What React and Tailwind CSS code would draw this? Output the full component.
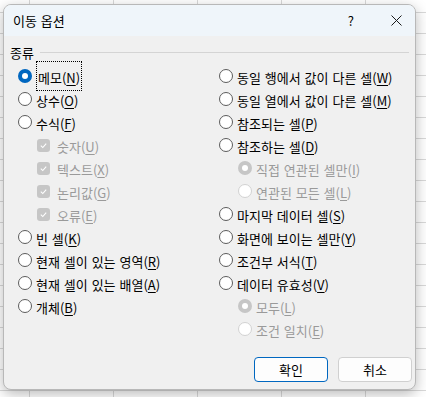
const font = { fontFamily: '"Noto Sans CJK KR", "Noto Sans", sans-serif' };

function Radio({ checked, disabled }) {
  if (checked && !disabled) {
    return (
      <span className="flex h-[14px] w-[14px] shrink-0 items-center justify-center rounded-full bg-[#0067c0]">
        <span className="h-[6px] w-[6px] rounded-full bg-white" />
      </span>
    );
  }
  if (checked && disabled) {
    return (
      <span className="flex h-[14px] w-[14px] shrink-0 items-center justify-center rounded-full bg-[#c6c6c6]">
        <span className="h-[6px] w-[6px] rounded-full bg-white" />
      </span>
    );
  }
  return (
    <span
      className={`h-[14px] w-[14px] shrink-0 rounded-full border bg-white ${
        disabled ? "border-[#d2d2d2] bg-[#f7f7f7]" : "border-[#5c5c5c]"
      }`}
    />
  );
}

function Check() {
  return (
    <span className="flex h-[13px] w-[13px] shrink-0 items-center justify-center rounded-[3px] bg-[#c6c6c6]">
      <svg width="9" height="9" viewBox="0 0 10 10">
        <path d="M2 5.2 L4.2 7.3 L8 3" fill="none" stroke="white" strokeWidth="1.2" />
      </svg>
    </span>
  );
}

function Label({ text, k, disabled }) {
  return (
    <span
      className={`text-[13px] leading-none [word-spacing:1px] ${
        disabled ? "text-[#9a9a9a]" : "text-black"
      }`}
    >
      {text}(<u className="underline-offset-2">{k}</u>)
    </span>
  );
}

function Row({ text, k, checked, disabled, kind = "radio", indent = 0, focus }) {
  return (
    <div className="flex h-[23px] items-center gap-[4px]" style={{ paddingLeft: indent }}>
      {kind === "radio" ? <Radio checked={checked} disabled={disabled} /> : <Check />}
      {focus ? (
        <span className="border border-dotted border-black px-[1px] py-[2px]">
          <Label text={text} k={k} disabled={disabled} />
        </span>
      ) : (
        <span className={kind === "check" ? "ml-[3px]" : ""}>
          <Label text={text} k={k} disabled={disabled} />
        </span>
      )}
    </div>
  );
}

export default function App() {
  return (
    <div
      className="relative h-[397px] w-[426px] overflow-hidden bg-white bg-[linear-gradient(to_right,#d9d9d9_1px,transparent_1px),linear-gradient(to_bottom,#d9d9d9_1px,transparent_1px)] bg-[size:84px_21px] bg-[position:29px_12px] pl-[3px] pt-[4px]"
      style={font}
    >
      <div className="flex h-[386px] w-[413px] flex-col overflow-hidden rounded-[8px] border border-[#b8b8b8] bg-[#f0f0f0] shadow-[0_4px_14px_rgba(0,0,0,0.28)]">
        <div className="flex h-[31px] shrink-0 items-center bg-[#eff5fa] pl-[9px]">
          <span className="text-[13px] text-black [word-spacing:1px]">이동 옵션</span>
          <span className="ml-auto mr-[37px] text-[13px] text-black">?</span>
          <svg className="mr-[13px]" width="11" height="11" viewBox="0 0 11 11">
            <path d="M0.5 0.5 L10.5 10.5 M10.5 0.5 L0.5 10.5" stroke="#1a1a1a" strokeWidth="1" />
          </svg>
        </div>
        <div className="flex flex-1 flex-col pl-[6px] pr-[3px]">
          <div className="mt-[7px] flex items-center gap-[6px] pr-[3px]">
            <span className="text-[13px] text-black">종류</span>
            <span className="h-px flex-1 bg-[#d4d4d4]" />
          </div>
          <div className="mt-[2px] flex">
            <div className="flex w-[209px] flex-col pl-[8px]">
              <Row text="메모" k="N" checked focus />
              <Row text="상수" k="O" />
              <Row text="수식" k="F" />
              <Row text="숫자" k="U" kind="check" disabled indent={19} />
              <Row text="텍스트" k="X" kind="check" disabled indent={19} />
              <Row text="논리값" k="G" kind="check" disabled indent={19} />
              <Row text="오류" k="E" kind="check" disabled indent={19} />
              <Row text="빈 셀" k="K" />
              <Row text="현재 셀이 있는 영역" k="R" />
              <Row text="현재 셀이 있는 배열" k="A" />
              <Row text="개체" k="B" />
            </div>
            <div className="flex flex-col">
              <Row text="동일 행에서 값이 다른 셀" k="W" />
              <Row text="동일 열에서 값이 다른 셀" k="M" />
              <Row text="참조되는 셀" k="P" />
              <Row text="참조하는 셀" k="D" />
              <Row text="직접 연관된 셀만" k="I" checked disabled indent={19} />
              <Row text="연관된 모든 셀" k="L" disabled indent={19} />
              <Row text="마지막 데이터 셀" k="S" />
              <Row text="화면에 보이는 셀만" k="Y" />
              <Row text="조건부 서식" k="T" />
              <Row text="데이터 유효성" k="V" />
              <Row text="모두" k="L" checked disabled indent={19} />
              <Row text="조건 일치" k="E" disabled indent={19} />
            </div>
          </div>
          <div className="mt-auto mb-[7px] flex justify-end gap-[10px]">
            <button className="h-[25px] w-[74px] rounded-[4px] border border-[#0067c0] bg-[#fdfdfd] text-[13px] text-black">
              확인
            </button>
            <button className="h-[25px] w-[74px] rounded-[4px] border border-[#d0d0d0] bg-[#fdfdfd] text-[13px] text-black">
              취소
            </button>
          </div>
        </div>
      </div>
    </div>
  );
}
